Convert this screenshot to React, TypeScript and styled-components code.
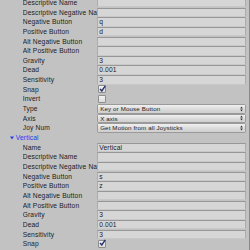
import styled, { createGlobalStyle } from 'styled-components'

const GlobalStyle = createGlobalStyle`
  html, body {
    margin: 0;
    padding: 0;
    background: #c2c2c2;
  }
`

const Panel = styled.div`
  width: 250px;
  height: 250px;
  overflow: hidden;
  background: #c2c2c2;
  display: flex;
  font-family: 'Liberation Sans', Arial, sans-serif;
  font-size: 6.7px;
  letter-spacing: 0.12px;
  color: #1c1c1c;
`

const List = styled.div`
  flex: 1;
  display: flex;
  flex-direction: column;
  margin-top: -2.5px;
`

const Edge = styled.div`
  width: 1px;
  background: #8a8a8a;
`

const Row = styled.div<{ $indent?: number }>`
  height: 9.667px;
  flex-shrink: 0;
  display: grid;
  grid-template-columns: ${(p) => 96.7 - (p.$indent ?? 22.7)}px 1fr;
  align-items: center;
  padding-left: ${(p) => p.$indent ?? 22.7}px;
  padding-right: 3.3px;
`

const Label = styled.span`
  white-space: nowrap;
  overflow: hidden;
  line-height: 9px;
`

const TextField = styled.div`
  height: 7.4px;
  margin-top: 0.4px;
  background: #d6d6d6;
  border-top: 1px solid #979797;
  border-left: 1px solid #acacac;
  border-right: 1px solid #acacac;
  border-bottom: 1px solid #c8c8c8;
  box-sizing: content-box;
  padding-left: 1.6px;
  line-height: 7.4px;
  white-space: nowrap;
  overflow: hidden;
`

const CheckBox = styled.div`
  width: 6px;
  height: 6px;
  margin-left: 1.5px;
  background: linear-gradient(#f2f2f2, #dadada);
  border: 1px solid #8e8e8e;
  border-radius: 1px;
  position: relative;

  svg {
    position: absolute;
    left: 0;
    top: -1.5px;
    width: 7px;
    height: 7px;
  }
`

const Popup = styled.div`
  height: 7.4px;
  margin-top: 0.4px;
  background: linear-gradient(#f0f0f0, #d9d9d9 60%, #cfcfcf);
  border: 1px solid #9a9a9a;
  border-radius: 1.5px;
  padding-left: 2.5px;
  padding-right: 2px;
  display: flex;
  align-items: center;
  justify-content: space-between;
  line-height: 7.4px;
  white-space: nowrap;
  font-size: 6.2px;

  svg {
    width: 3px;
    height: 6px;
    flex-shrink: 0;
  }
`

const Foldout = styled.div`
  height: 9.667px;
  flex-shrink: 0;
  display: flex;
  align-items: center;
  gap: 2px;
  padding-left: 9.8px;
  color: #2040ee;

  svg {
    width: 4px;
    height: 4px;
  }
`

type Field =
  | { label: string; kind: 'text'; value?: string }
  | { label: string; kind: 'check'; on: boolean }
  | { label: string; kind: 'popup'; value: string }

const horizontalTail: Field[] = [
  { label: 'Descriptive Name', kind: 'text' },
  { label: 'Descriptive Negative Name', kind: 'text' },
  { label: 'Negative Button', kind: 'text', value: 'q' },
  { label: 'Positive Button', kind: 'text', value: 'd' },
  { label: 'Alt Negative Button', kind: 'text' },
  { label: 'Alt Positive Button', kind: 'text' },
  { label: 'Gravity', kind: 'text', value: '3' },
  { label: 'Dead', kind: 'text', value: '0.001' },
  { label: 'Sensitivity', kind: 'text', value: '3' },
  { label: 'Snap', kind: 'check', on: true },
  { label: 'Invert', kind: 'check', on: false },
  { label: 'Type', kind: 'popup', value: 'Key or Mouse Button' },
  { label: 'Axis', kind: 'popup', value: 'X axis' },
  { label: 'Joy Num', kind: 'popup', value: 'Get Motion from all Joysticks' },
]

const vertical: Field[] = [
  { label: 'Name', kind: 'text', value: 'Vertical' },
  { label: 'Descriptive Name', kind: 'text' },
  { label: 'Descriptive Negative Name', kind: 'text' },
  { label: 'Negative Button', kind: 'text', value: 's' },
  { label: 'Positive Button', kind: 'text', value: 'z' },
  { label: 'Alt Negative Button', kind: 'text' },
  { label: 'Alt Positive Button', kind: 'text' },
  { label: 'Gravity', kind: 'text', value: '3' },
  { label: 'Dead', kind: 'text', value: '0.001' },
  { label: 'Sensitivity', kind: 'text', value: '3' },
  { label: 'Snap', kind: 'check', on: true },
]

const Check = () => (
  <svg viewBox="0 0 8 8" aria-hidden="true">
    <path d="M1.2 4.6 L3.2 6.8 L7.2 1" fill="none" stroke="#23306e" strokeWidth="1.6" />
  </svg>
)

const Arrows = () => (
  <svg viewBox="0 0 3 6" aria-hidden="true">
    <path d="M1.5 0.4 L2.8 2.4 H0.2 Z M1.5 5.6 L2.8 3.6 H0.2 Z" fill="#333" />
  </svg>
)

const FieldRow = ({ f }: { f: Field }) => (
  <Row>
    <Label>{f.label}</Label>
    {f.kind === 'text' && <TextField>{f.value}</TextField>}
    {f.kind === 'check' && <CheckBox>{f.on && <Check />}</CheckBox>}
    {f.kind === 'popup' && (
      <Popup>
        <span>{f.value}</span>
        <Arrows />
      </Popup>
    )}
  </Row>
)

const App = () => (
  <>
    <GlobalStyle />
    <Panel>
      <List>
        {horizontalTail.map((f, i) => (
          <FieldRow key={'h' + i} f={f} />
        ))}
        <Foldout>
          <svg viewBox="0 0 4 4" aria-hidden="true">
            <path d="M0 0.6 H4 L2 3.6 Z" fill="#2040ee" />
          </svg>
          <span>Vertical</span>
        </Foldout>
        {vertical.map((f, i) => (
          <FieldRow key={'v' + i} f={f} />
        ))}
      </List>
      <Edge />
    </Panel>
  </>
)

export default App
